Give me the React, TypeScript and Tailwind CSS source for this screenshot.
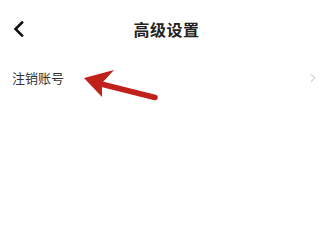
import { ChevronRight } from 'lucide-react';

export default function App() {
  return (
    <div
      className="relative w-[321px] h-[228px] bg-white overflow-hidden"
      style={{ fontFamily: '"Noto Sans CJK SC", "Noto Sans", sans-serif' }}
    >
      {/* Header */}
      <div className="flex items-center h-[58px] pl-[12px] pr-3">
        <svg width="14" height="16" viewBox="0 0 14 16" className="shrink-0">
          <path
            d="M10 1.5 L3.5 8 L10 14.5"
            fill="none"
            stroke="#111"
            strokeWidth="2.6"
            strokeLinecap="square"
          />
        </svg>
        <div className="flex-1 text-center text-[16px] font-bold text-[#222] leading-none pl-[12px] tracking-[0.5px]">
          高级设置
        </div>
        <div className="w-[14px]" />
      </div>

      {/* Row */}
      <div className="flex items-center justify-between h-[36px] pt-[3px] pl-[12px] pr-[1px]">
        <span className="text-[13px] text-[#333] leading-none">注销账号</span>
        <ChevronRight size={14} strokeWidth={1.5} className="text-[#b0b0b0]" />
      </div>

      {/* Annotation arrow */}
      <svg
        className="absolute left-0 top-0 pointer-events-none"
        width="321"
        height="228"
        viewBox="0 0 321 228"
      >
        <path d="M97 83 L155 97.5" stroke="#c0211b" strokeWidth="5.5" strokeLinecap="round" />
        <path d="M84 78 L114 70 L102 83 L102 97 Z" fill="#c0211b" />
      </svg>
    </div>
  );
}
